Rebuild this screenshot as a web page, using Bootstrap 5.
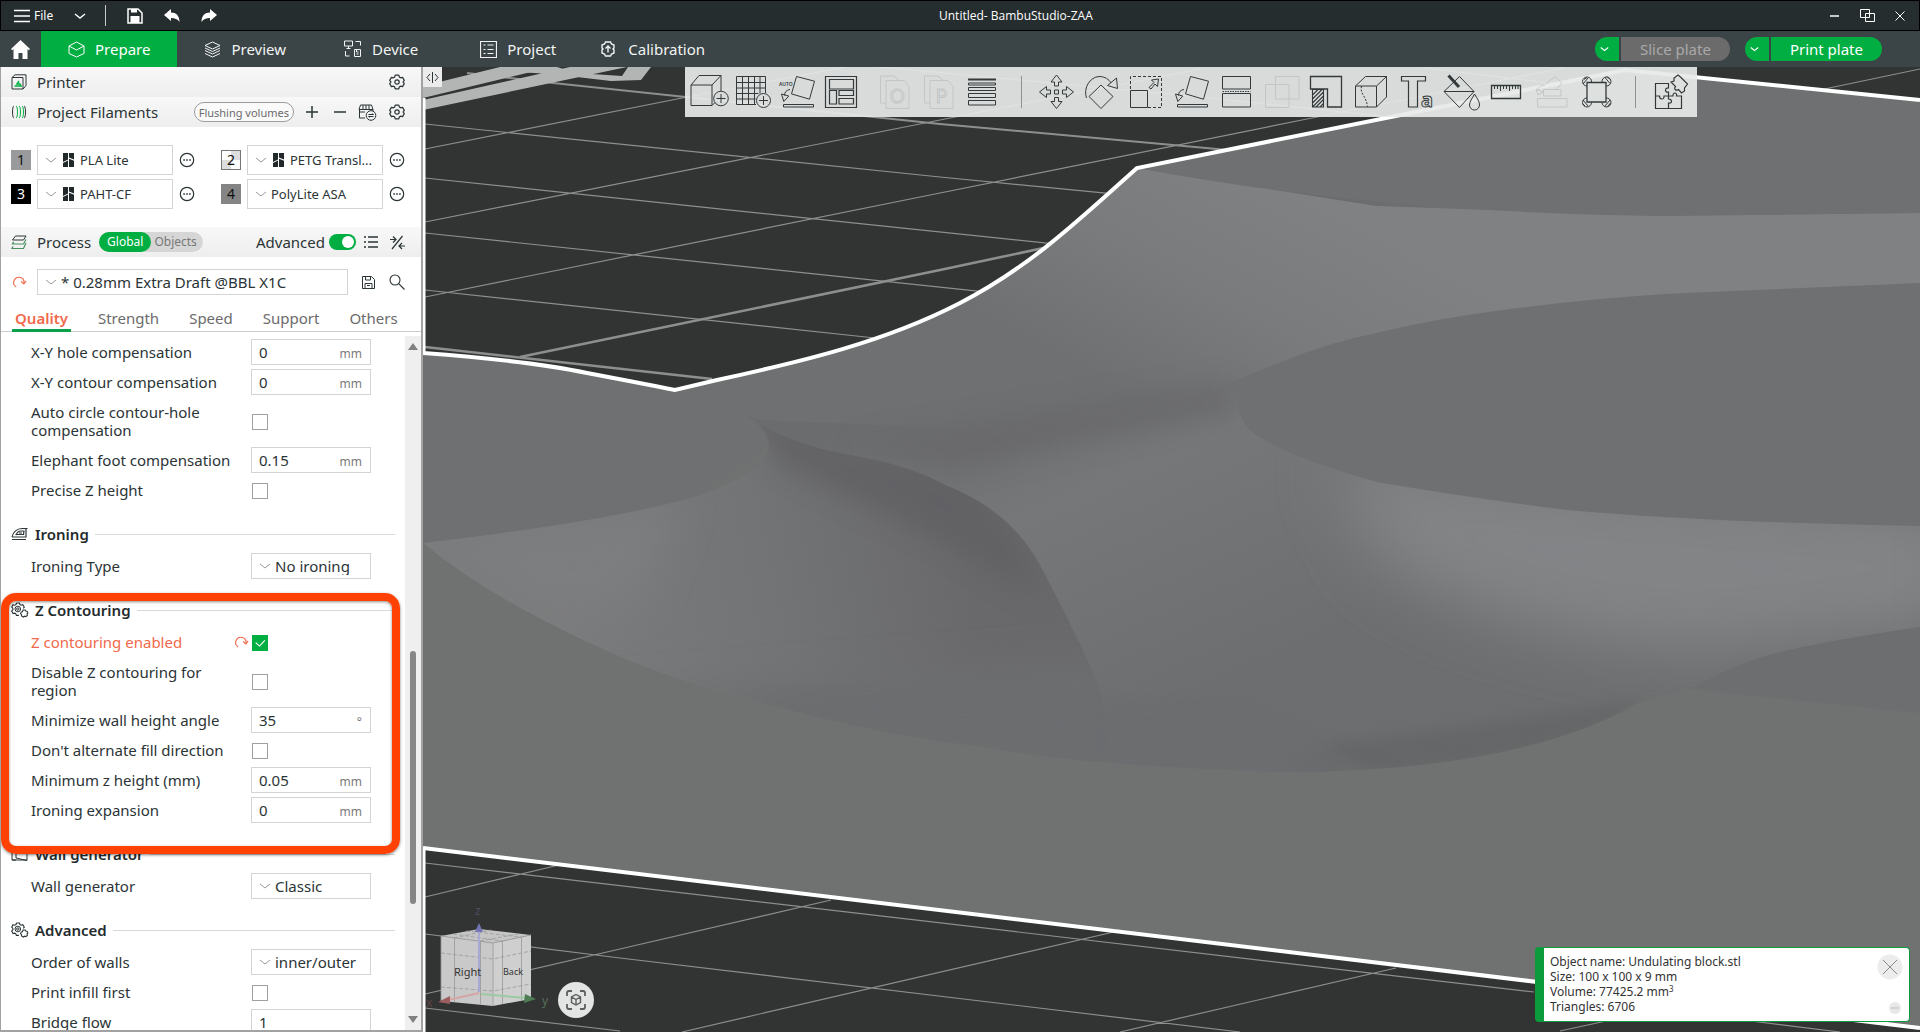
<!DOCTYPE html>
<html lang="en">
<head>
<meta charset="utf-8">
<meta name="viewport" content="width=device-width, initial-scale=1">
<title>Untitled- BambuStudio-ZAA</title>
<link rel="stylesheet" href="https://cdn.jsdelivr.net/npm/bootstrap@5.3.0/dist/css/bootstrap.min.css">
<style>
:root{--accent:#00ae42;--changed:#f0694c;--ink:#2b3436;--line:#d4d4d4}
body{font-family:"Noto Sans","Open Sans",sans-serif;font-size:15px;line-height:18px;color:var(--ink);overflow:hidden}
svg{display:block;flex:none}
.ico{fill:none;stroke:currentColor}
button{color:inherit}
.plain-btn{background:none;border:0;padding:0;display:flex;align-items:center;justify-content:center}
.title-bar{height:31px;background:#262d2f;border:1px solid #000;color:#fff;font-size:12px}
.menu-set{padding-left:13px;gap:21px}
.menu-set .file-btn{gap:4px}
.menu-set .vr{margin:4px 0 4px -2px}
.title-text{margin-left:-21px;font-family:"Open Sans",sans-serif}
.win-set{gap:20px;padding-right:14px}
.tab-bar{height:36px;background:#3b4446;color:#fff}
.tab-bar .nav-link{color:#f2f4f4;height:36px;padding:0 27px;gap:10px;border-radius:0}
.tab-bar .nav-link.home-link{padding:0 11px}
.tab-bar .nav-link.active{background:var(--accent);color:#fff}
.tab-bar .nav-link.calib{padding-left:18px;gap:13px}
.plates{gap:15px;padding-right:38px}
.plate-btn{height:24px;border-radius:12px;overflow:hidden;gap:2px}
.plate-btn button{border:0;background:var(--accent);color:#fff;height:24px;font-size:15px;line-height:22px}
.plate-btn .drop{width:24px;padding-left:5px}
.plate-btn .act{padding:0 19px}
.plate-btn button:disabled{background:#6b6b6b;color:#a9a9a9}
.side{width:423px;background:#fff;border:1px solid #a2a2a2;border-top:0;border-bottom-width:2px;border-right-width:2px}
.sec-head{height:30px;background:linear-gradient(#f8f8f8,#eeeeee);padding:0 16px 0 10px}
.sec-head .sec-name{font-size:15px;margin:0 0 0 10px;font-weight:400;line-height:18px}
.fil-tools{gap:12px}
.fil-tools .minus-btn{margin-left:4px}
.flush-btn{border:1px solid #9b9b9b;border-radius:10px;height:20px;font-size:11px;line-height:17px;color:#6b6b6b;background:#fafafa;padding:0 4px}
.fil-row{height:34px}
.fil-item{width:210px;padding-left:10px;gap:6px}
.fil-no{width:20px;height:20px;font-size:14px;line-height:19px;text-align:center;color:#111}
.n1{background:#989a9b}.n2{background:conic-gradient(#ddd 25%,#fff 0 50%,#ddd 0 75%,#fff 0);border:1px solid #777;line-height:17px}.n3{background:#000;color:#fff}.n4{background:#848484}
.pick{appearance:none;border:1px solid var(--line);border-radius:0;background:#fff url("data:image/svg+xml,%3Csvg xmlns='http://www.w3.org/2000/svg' width='12' height='8'%3E%3Cpath d='M1 2l5 4 5-4' fill='none' stroke='%23999'/%3E%3C/svg%3E") no-repeat 7px center;color:var(--ink);height:26px;font-size:15px;line-height:18px;padding:0 4px 0 23px}
.pick-fil{width:136px;height:30px;font-size:13px}
.pick-fil.branded{padding-left:42px}
.brand-mark{left:26px;top:8px;pointer-events:none}
.dots{width:16px}
.mode{background:#d6d6d6;border-radius:10px;height:20px;font-size:12px}
.mode button{border:0;border-radius:10px;height:20px;line-height:18px;padding:0 8px;background:none;color:#777}
.mode button.on{background:var(--accent);color:#fff}
.mode button:last-child{padding:0 6px 0 3px}
.form-switch .form-check-input{width:27px;height:16px;margin:0;border:0}
.form-check-input:checked{background-color:var(--accent);border-color:var(--accent)}
.form-check-input:focus{box-shadow:none}
.form-switch{padding:0;min-height:0;margin:0}
.preset-row{padding:12px 16px 0 11px;gap:14px}
.preset-row .pick{margin-left:-4px}
.preset-row .undo-btn{color:var(--changed)}
.preset-tabs{padding:0 11px;gap:24px;border-bottom:1px solid #c9cccc;height:37px}
.preset-tabs a{color:#6b6b6b;text-decoration:none;padding:14px 3px 0;height:37px;line-height:18px}
.preset-tabs a.active{color:var(--changed);font-weight:600;border-bottom:3px solid #0ba04b}
.opts{padding-top:5px;height:0}
.opt{min-height:30px;padding-left:30px}
.opt.tall{min-height:48px}
.opt>label{width:220px;padding-right:16px}
.opt .changed{color:var(--changed)}
.opt .undo{width:16px;margin:0 2px 0 -18px}
.field{width:120px;height:26px;border:1px solid var(--line);padding:0 8px 0 7px}
.field input{border:0;outline:0;width:70px;padding:0;color:var(--ink);font-size:15px;line-height:18px;background:none}
.field span{font-size:12px;color:#7a7a7a;padding-top:4px}
.pick.pick-opt{width:120px}
.tick{width:16px;height:16px;margin:1px 0 0 1px;border-radius:0!important;border:1px solid #a0a0a0}
.tick:checked{background-image:url("data:image/svg+xml,%3Csvg xmlns='http://www.w3.org/2000/svg' viewBox='0 0 16 16'%3E%3Cpath d='M3 7.500l4.500 4L13.500 5' fill='none' stroke='%23fff' stroke-width='1.300'/%3E%3C/svg%3E")!important}
.grp{height:34px;margin-top:12px;padding:0 10px 0 10px;gap:6px}
.grp h2{font-size:15px;line-height:18px;font-weight:600;margin:0;color:#242b2d}
.grp hr{margin:0;border-color:#d9d9d9;opacity:1}
.bar{width:16px;background:#efefef;padding:7px 0}
.thumb{width:6px;border-radius:3px;background:#868686}
.callout{left:0;top:261px;width:399px;height:261px;border:8px solid #ff4103;border-radius:15px;box-shadow:0 1px 3px rgba(0,0,0,.5),inset 0 1px 3px rgba(0,0,0,.45);pointer-events:none}
.scene-art{width:100%;height:100%}
.tools-wrap{top:0;left:38px;right:0}
.tools{height:50px;background:rgba(231,233,232,.92);padding:0 4px 0 2px;color:#33393a}
.tools .plain-btn{width:45px;height:50px}
.tools .set-a{margin-right:9px}
.tools .set-a .plain-btn,.tools .plain-btn.last{width:44px}
.tools .plain-btn:disabled{color:#c4c6c6}
.tools .rule{width:1px;height:32px;background:#8f9292;margin:0 12px 0 8px}
.tools .rule.end{margin:0 13px 0 16px}
.tools svg text,.cube text{font-family:"Noto Sans",sans-serif}
.fold{left:0;top:0;width:19px;height:20px;background:#ebebeb}
.cube{left:0;bottom:0}
.fitview{left:135px;bottom:14px;width:36px;height:36px;border-radius:18px;background:#e3e5e4;color:#5b5f5f}
.note{right:10px;bottom:10px;width:375px;border:1px solid #0b9a3c;border-left-width:9px;border-radius:4px;background:#fff;padding:6px 6px 7px;font-size:12px;line-height:15px;color:#333}
.note sup{font-size:8px;line-height:0}
</style>
<script src="https://cdn.jsdelivr.net/npm/bootstrap@5.3.0/dist/js/bootstrap.bundle.min.js"></script>
</head>
<body class="vh-100 d-flex flex-column">
<svg width="0" height="0" class="position-absolute" aria-hidden="true">
<defs>
<symbol id="gear" viewBox="0 0 16 16"><path d="M6.200 1.200h3.600l.6 1.900 1.300.7 1.900-.4 1.700 3-1.200 1.400v.4l1.200 1.400-1.700 3-1.900-.4-1.300.7-.6 1.900H6.200l-.6-1.900-1.300-.7-1.900.4-1.700-3 1.200-1.400v-.4L.7 6.400l1.700-3 1.900.4 1.300-.7z" fill="none" stroke="currentColor" stroke-width="1.200" stroke-linejoin="round"/><circle cx="8" cy="8" r="2.200" fill="none" stroke="currentColor" stroke-width="1.200"/></symbol>
<symbol id="gears" viewBox="0 0 18 16"><path d="M5.500 1h3l.5 1.600 1.200.6 1.600-.5 1.500 2.400-1 1.300M3.500 3.200 2 2.700.7 5.200l1.200 1.300v1.200L.7 9l1.400 2.500 1.700-.4 1 .7.600 1.600h2.500M5.500 1 5 2.600l-1.500.6" fill="none" stroke="currentColor" stroke-width="1.100"/><circle cx="6.800" cy="7" r="2.800" fill="none" stroke="currentColor"/><circle cx="6.800" cy="7" r="1.200" fill="none" stroke="currentColor"/><path d="M12 8h2.200l.5 1 1.300.2.9 1.800-.8 1 .3 1.400-1.500 1.200-1.200-.4-1.400.8-1.700-1-.1-1.300-1-1 .8-1.800 1.200-.2z" fill="none" stroke="currentColor" stroke-width="1.100"/></symbol>
<symbol id="undo" viewBox="0 0 16 14"><path d="M4.500 12.300A5.500 5.500 0 1 1 12.700 8.500" fill="none" stroke="currentColor" stroke-width="1.200"/><path d="M9.700 6.500 12.700 9 15 5.800" fill="none" stroke="currentColor" stroke-width="1.200"/></symbol>
<symbol id="more" viewBox="0 0 16 16"><circle cx="8" cy="8" r="6.700" fill="none" stroke="currentColor" stroke-width="1.200"/><path d="M4.300 7.300h1.600v1.500H4.300zM7.200 7.300h1.600v1.500H7.200zM10.100 7.300h1.600v1.500h-1.600z" fill="currentColor"/></symbol>
<symbol id="brand" viewBox="0 0 11 14"><path d="M0 0h5v6.500L0 9zM0 10l5-2.500V14H0zM6 0h5v6.500L6 4.500zM6 5.800l5 2V14H6z" fill="#22292b"/></symbol>
<symbol id="chev" viewBox="0 0 12 8"><path d="M1 2l5 4 5-4" fill="none" stroke="currentColor" stroke-width="1.400"/></symbol>
<symbol id="layflat" viewBox="0 0 44 50"><path d="M21.500 9.500l18 4.700-5 18-18-5.300zM6.500 27l2.300 7.500 5-5.500M6.500 27l7.300 2M9.500 28.500c0-3.500 2-5.500 5.500-6M8.500 37.500h30v2.500h-30z" fill="none" stroke="currentColor"/></symbol>
</defs>
</svg>

<header>
  <div class="title-bar d-flex align-items-center position-relative">
    <div class="menu-set d-flex align-items-center align-self-stretch">
    <button class="plain-btn file-btn"><svg class="ico" width="16" height="14" stroke-width="1.600"><path d="M0 1.500h16M0 7h16M0 12.500h16"/></svg>File</button>
    <button class="plain-btn" aria-label="File menu"><svg width="12" height="8"><use href="#chev"/></svg></button>
    <div class="vr opacity-75"></div>
    <button class="plain-btn" aria-label="Save"><svg class="ico" width="16" height="16"><path d="M1 1h10l4 4v10H1z" stroke-width="1.500"/><path d="M4 1h6v3.500H4zM3.500 8h9v7h-9z" fill="#fff" stroke="none"/></svg></button>
    <button class="plain-btn" aria-label="Undo"><svg width="16" height="14" fill="#fff"><path d="M7 0v3.500c5 0 8.500 3 8.500 9.500-2-3-4.500-4-8.500-4V12L0 6z"/></svg></button>
    <button class="plain-btn" aria-label="Redo"><svg width="16" height="14" fill="#fff"><path d="M9 0v3.500C4 3.500.5 6.500.5 13c2-3 4.500-4 8.500-4V12l7-6z"/></svg></button>
    </div>
    <div class="position-absolute start-50 title-text">Untitled- BambuStudio-ZAA</div>
    <div class="win-set ms-auto d-flex align-items-center">
      <button class="plain-btn" aria-label="Minimize"><svg class="ico" width="11" height="12"><path d="M1 6h9" stroke-width="1.500"/></svg></button>
      <button class="plain-btn" aria-label="Restore"><svg class="ico" width="15" height="13"><path d="M.5.500h9v8h-9zM5.500 4.500h9v8h-9z"/></svg></button>
      <button class="plain-btn" aria-label="Close"><svg class="ico" width="10" height="10"><path d="M.5.500l9 9M9.500.500l-9 9"/></svg></button>
    </div>
  </div>
  <div class="tab-bar d-flex align-items-center">
    <nav class="nav nav-pills flex-nowrap">
      <a class="nav-link home-link d-flex align-items-center" href="#" aria-label="Home"><svg width="19" height="19" fill="#fff"><path d="M9.500 0 19 9l-1.200 1.200-1.300-1.200v10h-5v-6h-4v6h-5V9l-1.300 1.200L0 9z"/></svg></a>
      <a class="nav-link active d-flex align-items-center" href="#"><svg class="ico" width="17" height="17"><path d="M8.500 1l7.500 4v7.500L8.500 16 1 12.500V5zM1 5l7.500 4L16 5" /></svg>Prepare</a>
      <a class="nav-link d-flex align-items-center me-1" href="#"><svg class="ico" width="17" height="17"><path d="M8.500 1l7.500 3.500L8.500 8 1 4.500zM1 7l7.500 3.500L16 7M1 9.500 8.500 13 16 9.500M1 12.500 8.500 16l7.500-3.500"/></svg>Preview</a>
      <a class="nav-link d-flex align-items-center me-2" href="#"><svg class="ico" width="18" height="18"><path d="M.5 1h8v5h-8zM2.500 8.500h4M4.500 6v2.500M11.500 1.500h5v4M1.500 11v5h4M10.500 9.500h6v7h-6zM12.500 9.500V12h2M12.500 14h2"/></svg>Device</a>
      <a class="nav-link d-flex align-items-center" href="#"><svg class="ico" width="17" height="17"><path d="M.5.500h16v16H.5zM3.500 4h2M7.500 4h6M3.500 8.500h2M7.500 8.500h6M3.500 12.500h2M7.500 12.500h6" stroke-width="1.200"/></svg>Project</a>
      <a class="nav-link calib d-flex align-items-center" href="#"><svg class="ico" width="14" height="16"><path d="M4.500 1h5l1 2 2.500 1v3l-1 1 1 1v3l-2.500 1-1 2h-5l-1-2L1 12V9l1-1-1-1V4l2.500-1z" stroke-width="1.400"/><path d="M7 11.500V5M4.500 7.500 7 5l2.500 2.500" stroke-width="1.400"/></svg>Calibration</a>
    </nav>
    <div class="ms-auto d-flex plates">
      <div class="plate-btn d-flex"><button class="drop" aria-label="Slice options"><svg width="9" height="6"><use href="#chev"/></svg></button><button class="act" disabled>Slice plate</button></div>
      <div class="plate-btn d-flex"><button class="drop" aria-label="Print options"><svg width="9" height="6"><use href="#chev"/></svg></button><button class="act">Print plate</button></div>
    </div>
  </div>
</header>

<main class="d-flex flex-grow-1 overflow-hidden">
<aside class="side d-flex flex-column flex-shrink-0 position-relative">
  <div class="sec-head d-flex align-items-center">
    <svg class="ico" width="16" height="16"><path d="M1 3.500 4 .8h11v10.700l-3 3.500H1zM12 15V3.500H1"/><path d="M3.500 12h6.500l-1-2H6l2-3" stroke="#00ae42" stroke-width="1.500"/></svg>
    <h2 class="sec-name">Printer</h2>
    <button class="plain-btn ms-auto" aria-label="Printer settings"><svg width="16" height="16"><use href="#gear"/></svg></button>
  </div>
  <div class="sec-head d-flex align-items-center">
    <svg class="ico" width="16" height="14"><path d="M3 1C1 1 1 13 3 13M13 1c2 0 2 12 0 12"/><path d="M5 1c2 0 2 12 0 12M8 1c2 0 2 12 0 12M11 1c2 0 2 12 0 12" stroke="#00ae42"/></svg>
    <h2 class="sec-name">Project Filaments</h2>
    <div class="fil-tools ms-auto d-flex align-items-center">
      <button class="flush-btn">Flushing volumes</button>
      <button class="plain-btn" aria-label="Add filament"><svg class="ico" width="12" height="12" stroke-width="1.500"><path d="M6 0v12M0 6h12"/></svg></button>
      <button class="plain-btn minus-btn" aria-label="Remove filament"><svg class="ico" width="12" height="12" stroke-width="1.500"><path d="M0 6h12"/></svg></button>
      <button class="plain-btn" aria-label="Sync filaments"><svg class="ico" width="19" height="17"><path d="M1 5.500 2.500 1h11L15 5.500V7M1 5.500h14M1.500 5.500V14H7M5 1v4.500M8 1v4.500M11 1v4.500M2 8h5"/><circle cx="13" cy="11.500" r="4.800"/><path d="M10.500 10.500h5l-1-1M15.500 12.500h-5l1 1"/></svg></button>
      <button class="plain-btn" aria-label="Filament settings"><svg width="16" height="16"><use href="#gear"/></svg></button>
    </div>
  </div>
  <div class="py-3 flex-shrink-0">
    <div class="fil-row d-flex align-items-center">
      <div class="fil-item d-flex align-items-center"><span class="fil-no n1">1</span><span class="position-relative"><select class="pick pick-fil branded" aria-label="Filament 1"><option>PLA Lite</option></select><svg class="brand-mark position-absolute" width="11" height="14"><use href="#brand"/></svg></span><button class="plain-btn dots" aria-label="Edit filament 1"><svg width="16" height="16"><use href="#more"/></svg></button></div>
      <div class="fil-item d-flex align-items-center"><span class="fil-no n2">2</span><span class="position-relative"><select class="pick pick-fil branded" aria-label="Filament 2"><option>PETG Transl...</option></select><svg class="brand-mark position-absolute" width="11" height="14"><use href="#brand"/></svg></span><button class="plain-btn dots" aria-label="Edit filament 2"><svg width="16" height="16"><use href="#more"/></svg></button></div>
    </div>
    <div class="fil-row d-flex align-items-center">
      <div class="fil-item d-flex align-items-center"><span class="fil-no n3">3</span><span class="position-relative"><select class="pick pick-fil branded" aria-label="Filament 3"><option>PAHT-CF</option></select><svg class="brand-mark position-absolute" width="11" height="14"><use href="#brand"/></svg></span><button class="plain-btn dots" aria-label="Edit filament 3"><svg width="16" height="16"><use href="#more"/></svg></button></div>
      <div class="fil-item d-flex align-items-center"><span class="fil-no n4">4</span><select class="pick pick-fil" aria-label="Filament 4"><option>PolyLite ASA</option></select><button class="plain-btn dots" aria-label="Edit filament 4"><svg width="16" height="16"><use href="#more"/></svg></button></div>
    </div>
  </div>
  <div class="sec-head d-flex align-items-center flex-shrink-0">
    <svg class="ico" width="16" height="15"><path d="M4.500 1H15l-2.500 4H1.500z"/><path d="M3 7.500H1.500M15 4.500 12.500 9H1.500l1-2M15 8l-2.500 5.500H1l1-2" stroke="#4a8f62" stroke-width="1.200"/></svg>
    <h2 class="sec-name">Process</h2>
    <div class="mode d-flex ms-2"><button class="on">Global</button><button>Objects</button></div>
    <div class="ms-auto d-flex align-items-center">
      <label for="adv">Advanced</label>
      <div class="form-check form-switch d-flex ms-1"><input class="form-check-input" type="checkbox" role="switch" id="adv" checked></div>
      <button class="plain-btn ms-2" aria-label="List view"><svg class="ico me-1" width="14" height="12" stroke-width="1.400"><path d="M4 1h10M4 6h10M4 11h10M0 1h2M0 6h2M0 11h2"/></svg></button>
      <button class="plain-btn ms-2" aria-label="Compare"><svg class="ico" width="15" height="15" stroke-width="1.200"><path d="M12.500 1 2 14M0 4.500h5.500M3 1.500l3 3-3 3M15 11H9M12 8l-3 3 3 3"/></svg></button>
    </div>
  </div>
  <div class="d-flex align-items-center flex-shrink-0 preset-row">
    <button class="plain-btn undo-btn" aria-label="Reset preset"><svg width="15" height="14"><use href="#undo"/></svg></button>
    <select class="pick flex-grow-1" aria-label="Process preset"><option>* 0.28mm Extra Draft @BBL X1C</option></select>
    <button class="plain-btn" aria-label="Save preset"><svg class="ico" width="13" height="13"><path d="M.5.500h9l3 3v9H.5zM3.500.500v3.500h5V.5M3 12.500V7.500h7v5M5 9.500h3"/></svg></button>
    <button class="plain-btn" aria-label="Search"><svg class="ico" width="16" height="16" stroke-width="1.100"><circle cx="6" cy="6" r="5"/><path d="M9.700 9.700 15.500 15.500"/></svg></button>
  </div>
  <nav class="preset-tabs d-flex flex-shrink-0">
    <a class="active" href="#">Quality</a><a href="#">Strength</a><a href="#">Speed</a><a href="#">Support</a><a href="#">Others</a>
  </nav>
  <div class="d-flex flex-grow-1 overflow-hidden position-relative">
    <div class="opts flex-grow-1">
      <div class="opt d-flex align-items-center"><label for="o1">X-Y hole compensation</label><div class="field d-flex align-items-center justify-content-between"><input id="o1" value="0"><span>mm</span></div></div>
      <div class="opt d-flex align-items-center"><label for="o2">X-Y contour compensation</label><div class="field d-flex align-items-center justify-content-between"><input id="o2" value="0"><span>mm</span></div></div>
      <div class="opt tall d-flex align-items-center"><label for="o3">Auto circle contour-hole compensation</label><input class="form-check-input tick" type="checkbox" id="o3"></div>
      <div class="opt d-flex align-items-center"><label for="o4">Elephant foot compensation</label><div class="field d-flex align-items-center justify-content-between"><input id="o4" value="0.15"><span>mm</span></div></div>
      <div class="opt d-flex align-items-center"><label for="o5">Precise Z height</label><input class="form-check-input tick" type="checkbox" id="o5"></div>

      <div class="grp d-flex align-items-center"><svg class="ico" width="18" height="14"><path d="M1 10C2 5 6 1.500 11 1.500h5.500M15 1.500V10H1M5 8c1-2.500 2.500-4 5-4h3l-.5 3.500H5zM8 6h3M1 12.500h14" stroke-width="1.200"/></svg><h2>Ironing</h2><hr class="flex-grow-1"></div>
      <div class="opt d-flex align-items-center"><label for="o6">Ironing Type</label><select class="pick pick-opt" id="o6"><option>No ironing</option></select></div>

      <div class="grp d-flex align-items-center"><svg width="18" height="16"><use href="#gears"/></svg><h2>Z Contouring</h2><hr class="flex-grow-1"></div>
      <div class="opt d-flex align-items-center"><label for="o7" class="changed">Z contouring enabled</label><button class="plain-btn undo changed" aria-label="Reset Z contouring"><svg width="15" height="14"><use href="#undo"/></svg></button><input class="form-check-input tick" type="checkbox" id="o7" checked></div>
      <div class="opt tall d-flex align-items-center"><label for="o8">Disable Z contouring for region</label><input class="form-check-input tick" type="checkbox" id="o8"></div>
      <div class="opt d-flex align-items-center"><label for="o9">Minimize wall height angle</label><div class="field d-flex align-items-center justify-content-between"><input id="o9" value="35"><span>°</span></div></div>
      <div class="opt d-flex align-items-center"><label for="o10">Don't alternate fill direction</label><input class="form-check-input tick" type="checkbox" id="o10"></div>
      <div class="opt d-flex align-items-center"><label for="o11">Minimum z height (mm)</label><div class="field d-flex align-items-center justify-content-between"><input id="o11" value="0.05"><span>mm</span></div></div>
      <div class="opt d-flex align-items-center"><label for="o12">Ironing expansion</label><div class="field d-flex align-items-center justify-content-between"><input id="o12" value="0"><span>mm</span></div></div>

      <div class="grp d-flex align-items-center"><svg class="ico" width="18" height="16"><path d="M1 3.500 5 2v10l11 2.500V5L12 4M1 3.500V14h4M1 14h15"/></svg><h2>Wall generator</h2><hr class="flex-grow-1"></div>
      <div class="opt d-flex align-items-center"><label for="o13">Wall generator</label><select class="pick pick-opt" id="o13"><option>Classic</option></select></div>

      <div class="grp d-flex align-items-center"><svg width="18" height="16"><use href="#gears"/></svg><h2>Advanced</h2><hr class="flex-grow-1"></div>
      <div class="opt d-flex align-items-center"><label for="o14">Order of walls</label><select class="pick pick-opt" id="o14"><option>inner/outer</option></select></div>
      <div class="opt d-flex align-items-center"><label for="o15">Print infill first</label><input class="form-check-input tick" type="checkbox" id="o15"></div>
      <div class="opt d-flex align-items-center"><label for="o16">Bridge flow</label><div class="field d-flex align-items-center"><input id="o16" value="1"></div></div>
    </div>
    <div class="bar d-flex flex-column align-items-center flex-shrink-0 mt-1">
      <svg width="10" height="7"><path d="M5 0l5 7H0z" fill="#808080"/></svg>
      <div class="d-flex flex-column flex-grow-1"><div style="flex:300"></div><div class="thumb" style="flex:252"></div><div style="flex:112"></div></div>
      <svg width="10" height="7"><path d="M5 7l5-7H0z" fill="#808080"/></svg>
    </div>
    <div class="callout position-absolute"></div>
  </div>
</aside>

<section class="flex-grow-1 position-relative overflow-hidden">
<svg class="scene-art position-absolute" viewBox="423 67 1497 965" preserveAspectRatio="xMidYMid slice" role="img" aria-label="3D view of the undulating block on the build plate">
<defs>
<linearGradient id="top" x1="1300" y1="190" x2="1180" y2="420" gradientUnits="userSpaceOnUse"><stop offset="0" stop-color="#808183"/><stop offset=".5" stop-color="#7a7b7c"/><stop offset="1" stop-color="#6f7071"/></linearGradient>
<linearGradient id="wave" x1="900" y1="400" x2="1060" y2="760" gradientUnits="userSpaceOnUse"><stop offset="0" stop-color="#6b6c6d"/><stop offset=".4" stop-color="#767778"/><stop offset="1" stop-color="#6d6e6f"/></linearGradient>
<linearGradient id="dip" x1="560" y1="600" x2="960" y2="520" gradientUnits="userSpaceOnUse"><stop offset="0" stop-color="#7a7b7c"/><stop offset=".5" stop-color="#737475"/><stop offset="1" stop-color="#69696b"/></linearGradient>
<filter id="b30" x="-50%" y="-80%" width="200%" height="260%"><feGaussianBlur stdDeviation="32"/></filter>
<filter id="b20" x="-50%" y="-50%" width="200%" height="200%"><feGaussianBlur stdDeviation="20"/></filter>
<filter id="b12" x="-50%" y="-80%" width="200%" height="260%"><feGaussianBlur stdDeviation="13"/></filter>
<filter id="b8" x="-50%" y="-50%" width="200%" height="200%"><feGaussianBlur stdDeviation="8"/></filter>
<clipPath id="obj"><path d="M423 353Q530 361 587 373 640 383 675 390L717 380C800 362 885 342 960 303 1030 267 1080 219 1137 168L1625 70 1920 100V1028L423 848Z"/></clipPath>
<clipPath id="wv"><path d="M423 543Q620 520 700 495 770 470 769 445 768 428 745 415L675 390 975 296 1137 168Q1376 213 1663 216L1920 213V627Q1800 645 1759 658 1720 672 1690 689L1640 702Q1520 772 1281 772 1080 765 994 748 880 735 783 708 660 680 563 630 480 590 423 543Z"/></clipPath>
<clipPath id="left"><path d="M745 415Q790 445 850 455 910 465 945 485 1010 510 1040 565 1080 640 1100 690L1110 780H423V543L700 495 769 445Z"/></clipPath>
</defs>
<rect x="423" y="67" width="1497" height="965" fill="#323434"/>
<g stroke="#8d8f8f" stroke-width="1.200" fill="none">
<path d="M425 124 940 177 1300 212M425 178 1150 254M425 233 1100 304M425 290 875 338M870 66 1200 97 1420 120M1423 68 1560 84M425 149 677 99 850 66M425 222 940 120 1200 69M425 297 940 193 1307 119 1563 68M1810 92 1920 69"/>
<path d="M467 73 553 83 940 124 1250 152" stroke-width="2"/><path d="M425 347 712 379M520 357 940 270 1100 236" stroke-width="2.500"/>
<path d="M425 863 1534 992M425 934 620 958 1240 1032M425 1008 620 1031M425 897 559 865M425 994 620 949 831 900M682 1032 1118 931M1120 1032 1396 968M1560 1031 1620 1018M1743 1020 1840 1032"/>
</g>
<g fill="#b3b5b5"><path d="M423 98V86L500 67H552Z"/><path d="M423 110V100L570 67H627ZM505 67h52l20 6 45 3 6-9h23l-10 13-30 1-60-7-50-3z" /></g>
<g clip-path="url(#obj)">
<rect x="423" y="67" width="1497" height="965" fill="#707271"/>
<path d="M423 340 675 380 1137 160 1625 60 1920 90V713L1690 689 1300 500 769 445 700 495Q600 525 423 543Z" fill="#6f7072"/>
<g clip-path="url(#wv)">
<rect x="423" y="150" width="1497" height="640" fill="url(#wave)"/>
<path d="M675 390 975 296 1137 168 1376 206 1663 216 1920 213V300L1400 340 1228 385 1000 430 760 420Z" fill="url(#top)"/>
<path d="M1330 460 1960 510V625L1700 650Q1500 640 1380 560Z" fill="#838486" filter="url(#b30)"/>
<path d="M850 445Q1050 410 1228 384L1240 410Q1080 440 960 470Z" fill="#67686a" opacity=".8" filter="url(#b12)"/>
<g clip-path="url(#left)"><rect x="423" y="400" width="700" height="390" fill="url(#dip)"/>
<path d="M740 405 860 445 960 470 1020 540 1040 600 940 540 780 465Z" fill="#606163" opacity=".8" filter="url(#b12)"/>
<path d="M423 543Q560 525 680 500L640 600 560 620Z" fill="#7d7e7f" filter="url(#b20)"/>
<path d="M600 700 1120 660V800H600Z" fill="#6d6e6f" filter="url(#b20)"/></g>
<path d="M1330 745Q1520 720 1645 700L1600 730Q1450 785 1281 772Z" fill="#656668" filter="url(#b8)"/>
<path d="M760 700Q1000 700 1250 715L1400 780H900Z" fill="#6c6d6f" opacity=".7" filter="url(#b8)"/>
</g>
<path d="M1228 384Q1260 370 1281 362 1330 342 1377 333 1480 307 1664 294L1920 283V526Q1700 522 1568 510 1470 498 1377 482 1280 455 1250 430 1236 416 1240 400Z" fill="#6f7072"/>
<path d="M1920 627Q1800 645 1759 658 1720 672 1690 689L1920 713Z" fill="#6d6e70"/>
</g>
<path d="M423 353Q530 361 587 373 640 383 675 390L717 380C800 362 885 342 960 303 1030 267 1080 219 1137 168L1625 70 1920 100" fill="none" stroke="#fff" stroke-width="4"/>
<path d="M423 848 1920 1028" fill="none" stroke="#fff" stroke-width="4"/>
<path d="M424 98V353M424 848V1032" stroke="#fff" stroke-width="3"/>
</svg>

<button class="plain-btn fold position-absolute" aria-label="Collapse sidebar"><svg class="ico" width="13" height="11"><path d="M4 2 1 5.500 4 9M9 2l3 3.500L9 9M6.500 0v11"/></svg></button>

<div class="tools-wrap position-absolute d-flex justify-content-center">
<div class="tools d-flex align-items-center" role="toolbar" aria-label="Model tools">
  <div class="set-a d-flex">
  <button class="plain-btn" aria-label="Add"><svg class="ico" width="44" height="50"><path d="M4 18h21v20.500H4zM4 18l8-9.500h22L25 18M34 8.500V24M25 38.500l3-3"/><circle cx="34" cy="31.500" r="7.300"/><path d="M34 27v9M29.500 31.500h9"/></svg></button>
  <button class="plain-btn" aria-label="Add plate"><svg class="ico" width="44" height="50"><path d="M25 37.500H5.500v-28h29V26M11.500 9.500v28M17.500 9.500v28M23.500 9.500v28M29 9.500v17M5.500 15.500h29M5.500 21h29M5.500 26.500h22M5.500 32h19"/><circle cx="32.500" cy="33.500" r="7"/><path d="M32.500 29v9M28 33.500h9"/></svg></button>
  <button class="plain-btn" aria-label="Auto orient"><svg width="44" height="50"><use href="#layflat"/><text x="4" y="19" font-size="5" font-weight="600" fill="currentColor">AUTO</text></svg></button>
  <button class="plain-btn" aria-label="Arrange"><svg class="ico" width="44" height="50"><path d="M6.500 9.500h31v31h-31zM10.500 12.500h24v9.500h-24zM10.500 23.500h7V37h-7zM20 23.500h14.500v5H20zM20 31.500h14.500V37H20z" stroke-width="1.200"/></svg></button>
  </div>
  <div class="set-a d-flex">
  <button class="plain-btn" disabled aria-label="Split to objects"><svg class="ico" width="44" height="50"><path d="M14 36H8.500V9H22l5 4.500M14 13.500h18l5 6v22H14z"/><text x="17.500" y="36" font-size="20">O</text></svg></button>
  <button class="plain-btn" disabled aria-label="Split to parts"><svg class="ico" width="44" height="50"><path d="M14 36H8.500V9H22l5 4.500M14 13.500h18l5 6v22H14z"/><text x="19.500" y="36" font-size="20">P</text></svg></button>
  <button class="plain-btn" aria-label="Variable layer height"><svg class="ico" width="44" height="50"><path d="M8 12.500h28" stroke-width="2"/><path d="M8.500 16h27v2h-27zM8.500 20.500h27v3h-27zM8.500 26.500h27v4h-27zM8.500 33.500h27v4.500h-27z"/></svg></button>
  </div>
  <div class="rule"></div>
  <div class="set-b d-flex">
  <button class="plain-btn" aria-label="Move"><svg class="ico" width="44" height="50"><path d="M22.500 8l5.500 7h-3.500v4h-4v-4H17zM22.500 41.500l5.500-7h-3.500v-4h-4v4H17zM5.500 25l7-5.500V23h4v4h-4v3.500zM39.500 25l-7-5.500V23h-4v4h4v3.500zM20.500 23h4v4h-4z" /></svg></button>
  <button class="plain-btn" aria-label="Rotate"><svg class="ico" width="44" height="50"><path d="M22 18l12 11.500-12 12-12-12zM7.500 31C4 21 11 10 20 9.500c6 0 10 3 12 6.500M28.500 18.500l9-7.500 1 10.500z"/></svg></button>
  <button class="plain-btn" aria-label="Scale"><svg class="ico" width="44" height="50"><path d="M6.500 22V9.500h31v31H24" stroke-dasharray="3 2"/><path d="M6.500 23.500h17v17h-17zM25 20.500l5-5-2.500-2.500 7-1-1 7.500-2.500-2.500-4 5z"/></svg></button>
  <button class="plain-btn" aria-label="Lay on face"><svg width="44" height="50"><use href="#layflat"/></svg></button>
  <button class="plain-btn" aria-label="Cut"><svg class="ico" width="44" height="50"><path d="M8.500 9.500h28V22h-28zM8.500 26.500h28V40h-28z"/><path d="M8.500 24.500h28" stroke-dasharray="1.500 1"/></svg></button>
  <button class="plain-btn" disabled aria-label="Mesh boolean"><svg class="ico" width="44" height="50"><path d="M6.500 17.500H30v23H6.500zM16.500 9.500H40V32H16.500z"/></svg></button>
  <button class="plain-btn" aria-label="Supports"><svg class="ico" width="44" height="50"><path d="M6.500 9.500h31v30.500h-14V22h-17z" stroke-width="1.300"/><path d="M8.500 22.500h11V40h-11zM8.500 28l5.500-5.500M8.500 32l9.500-9.500M8.500 36l11-11M8.500 40l11-11M12 40l7.500-7.500M16 40l3.500-3.500" stroke-width="1.100"/></svg></button>
  <button class="plain-btn" aria-label="Seam"><svg class="ico" width="44" height="50"><path d="M6.500 19h21v21h-21zM6.500 19l10-9.500h21L27.500 19M37.500 9.500V30l-10 10"/><path d="M12.500 19c-2 8 5 10 6 21" stroke-dasharray="2 1.500"/></svg></button>
  <button class="plain-btn" aria-label="Text"><svg class="ico" width="44" height="50"><path d="M7.500 9.500h24V14h-8v26h-9V14h-7z" stroke-width="1.200"/><text x="27" y="40" font-size="20" font-weight="700">a</text></svg></button>
  <button class="plain-btn" aria-label="Color painting"><svg class="ico" width="44" height="50"><path d="M20.500 9.500 35 24.500 20.500 40.500 5 24.500zM5 24.500h30M35.500 27c3 5 5 7.500 5 11a5 5 0 0 1-10 0c0-3.500 2.500-6 5-11z"/><path d="M9.500 8.500 20 20" stroke-width="3"/></svg></button>
  <button class="plain-btn" aria-label="Measure"><svg class="ico" width="44" height="50"><path d="M7.500 18.500h29v13h-29z" stroke-width="1.300"/><path d="M10.500 19v3M13.500 19v3M16.500 19v5M19.500 19v3M22.500 19v3M25.500 19v5M28.500 19v3M31.500 19v3M34 19v3"/></svg></button>
  <button class="plain-btn" disabled aria-label="Assembly"><svg class="ico" width="44" height="50"><path d="M8.500 31.500H38V40H8.500zM14.500 22.500H32V29H14.500zM17 17l9-7.500 7 7-6 6M7 22l2 6 5-3zM9 23c1-4 4-5 7-5"/></svg></button>
  <button class="plain-btn" aria-label="Brim ears"><svg class="ico" width="44" height="50"><path d="M13 15.500h19V35H13z" stroke-width="1.300"/><path d="M13 19a4.500 4.500 0 1 1 4.500-4M28 15a4.500 4.500 0 1 1 4 4M32 31a4.500 4.500 0 1 1-4 4.500M17.500 35.500A4.500 4.500 0 1 1 13 31M9 17l5-6M10 12.500l3-2M31 10.500l5 6M33 9.500l3 3M9 33l5 6M9 37l2 2M36 33l-5 6M36.500 36l-3 3.500"/></svg></button>
  </div>
  <div class="rule end"></div>
  <button class="plain-btn last" aria-label="Assembly view"><svg class="ico" width="44" height="50"><path d="M14 16.500H6.500V41.500h26V29h-5c1-4-4-4-3.500 0h-4.500v-4c-4 1-4-4.500 0-4v-4.500zM19.500 29v3c4 0 4 5 0 4v5.500M6.500 29h4c0 4 5 4 4.500 0h5M22 15l3-1 0-3 4-3 3 2.500 6.500 6.500-3 4v3l-3 2-3-3.500c-3 2-5-1-3-3z" stroke-width="1.200"/></svg></button>
</div>
</div>

<svg class="cube position-absolute" width="150" height="132" viewBox="423 900 150 132" aria-label="View orientation: Right, Back">
<path d="M441 936 479 929 531 935 493 943Z" fill="#c6c6c6"/><path d="M441 936 493 943V1006L441 1001Z" fill="#c9c9c9"/><path d="M493 943 531 935V999L493 1006Z" fill="#cfcfcf"/>
<g stroke="#999" fill="none" stroke-width=".8"><path d="M454.500 938V1002M480.500 941V1004M502.500 941V1004M521.500 937V1000M441 936V1001M493 943V1006M441 936 493 943 531 935"/><path d="M441 953 493 959 531 951M441 987 493 991 531 984M453 934 502 941M466 931 521 937M454 938 491 930M480 941 518 934" stroke-dasharray="4 2"/></g>
<path d="M479 992V928" stroke="#a9a9d6" stroke-width="2"/><path d="M475 932l4-9 4 9z" fill="#7575b5"/>
<path d="M479 993 448 1000" stroke="#d6a5a5" stroke-width="2"/><path d="M450 996l-12 6 12 2z" fill="#9b5d5d"/>
<path d="M481 994 526 998" stroke="#9bcaa2" stroke-width="2"/><path d="M525 994l11 5-12 4z" fill="#4d7d54"/>
<text x="454" y="976" font-size="11" fill="#333">Right</text><text x="503" y="975" font-size="9" fill="#333">Back</text>
<text x="475" y="915" font-size="12" fill="#4c4c60">z</text><text x="426" y="1007" font-size="12" fill="#604444">x</text><text x="542" y="1005" font-size="12" fill="#557058">y</text>
</svg>
<button class="plain-btn fitview position-absolute" aria-label="Fit view"><svg class="ico" width="20" height="20" stroke-width="1.800"><path d="M1 6V3q0-2 2-2h3M14 1h3q2 0 2 2v3M19 14v3q0 2-2 2h-3M6 19H3q-2 0-2-2v-3"/><path d="M10 4.500l4.500 2.500v5.500L10 15l-4.500-2.500V7zM5.500 7l4.500 2.500L14.500 7M10 9.500V15" stroke-width="1.400"/></svg></button>

<div class="note position-absolute d-flex justify-content-between" role="status">
  <div>Object name: Undulating block.stl<br>Size: 100 x 100 x 9 mm<br>Volume: 77425.2 mm<sup>3</sup><br>Triangles: 6706</div>
  <div class="d-flex flex-column justify-content-between align-items-end">
    <button class="plain-btn" aria-label="Dismiss"><svg class="ico" width="26" height="26"><circle cx="13" cy="13" r="12.500" fill="#ececec" stroke="none"/><path d="M6 6l14 14M20 6 6 20" stroke="#8a8a8a"/></svg></button>
    <button class="plain-btn" aria-label="Collapse"><svg width="16" height="12"><circle cx="8" cy="6" r="6" fill="#e8e8e8"/><path d="M4 6h8" stroke="#bbb"/></svg></button>
  </div>
</div>
</section>
</main>
</body>
</html>
